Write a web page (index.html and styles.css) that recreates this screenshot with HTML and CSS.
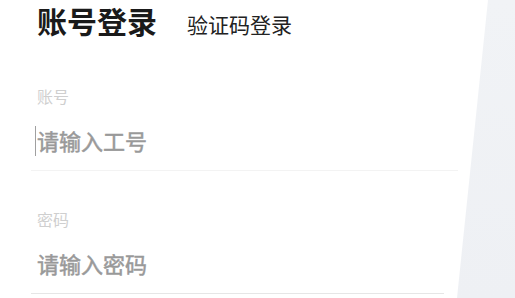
FILE: index.html
```html
<!DOCTYPE html>
<html lang="zh-CN">
<head>
    <meta charset="UTF-8">
    <meta name="viewport" content="width=device-width, initial-scale=1.0">
    <title>账号登录</title>
    <link rel="stylesheet" href="styles.css">
</head>
<body>
    <div class="login">
        <div class="tabs">
            <span class="tab active">账号登录</span>
            <span class="tab">验证码登录</span>
        </div>
        <form>
            <div class="field account">
                <label for="account">账号</label>
                <div class="input-wrap">
                    <span class="caret"></span>
                    <input type="text" id="account" name="account" placeholder="请输入工号">
                </div>
            </div>
            <div class="field password">
                <label for="password">密码</label>
                <div class="input-wrap">
                    <input type="password" id="password" name="password" placeholder="请输入密码">
                </div>
            </div>
        </form>
    </div>
    <div class="side-panel"></div>
</body>
</html>
```

FILE: styles.css
```css
* {
    box-sizing: border-box;
}
body {
    margin: 0;
    height: 298px;
    overflow: hidden;
    background: #fff;
    font-family: "Noto Sans CJK SC", "Noto Sans", sans-serif;
    position: relative;
}
.login {
    padding-left: 31px;
}
.tabs {
    display: flex;
    align-items: baseline;
    gap: 30px;
    padding: 0 0 0 6px;
    height: 50px;
}
.tab {
    font-size: 21px;
    line-height: 40px;
    color: #222;
}
.tab.active {
    font-size: 30px;
    font-weight: bold;
    color: #1a1a1a;
}
.field {
    padding-left: 6px;
    border-bottom: 1px solid #f3f3f3;
}
.field.account {
    width: 427px;
    padding-top: 36px;
}
.field.password {
    width: 413px;
    padding-top: 38px;
    border-bottom-color: #e6e6e6;
}
.field label {
    display: block;
    font-size: 16px;
    line-height: 20px;
    color: #cfcfcf;
}
.input-wrap {
    position: relative;
    height: 64px;
    padding-top: 21px;
}
.input-wrap input {
    border: none;
    outline: none;
    padding: 0;
    width: 100%;
    font-family: inherit;
    font-size: 22px;
    line-height: 26px;
    height: 26px;
    color: #333;
    background: transparent;
}
.input-wrap input::placeholder {
    color: #999;
    -webkit-text-stroke: 0.5px #999;
}
.caret {
    position: absolute;
    left: -2px;
    top: 20px;
    width: 1px;
    height: 30px;
    background: #a0a0a0;
}
.side-panel {
    position: absolute;
    top: 0;
    right: 0;
    width: 58px;
    height: 298px;
    background: linear-gradient(180deg, #f1f3f6 0%, #eef0f4 100%);
    clip-path: polygon(31px 0, 100% 0, 100% 100%, 0 100%);
}
```
